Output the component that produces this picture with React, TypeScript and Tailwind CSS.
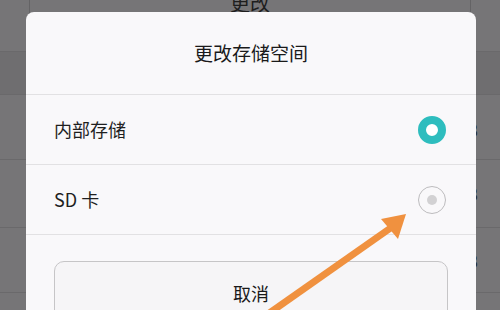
export default function App() {
  const font = { fontFamily: '"Noto Sans CJK SC", "Noto Sans", sans-serif' };
  return (
    <div className="relative w-[500px] h-[310px] overflow-hidden bg-[#767577]" style={font}>
      {/* page behind the dialog */}
      <div className="flex flex-col">
        <div className="h-[52px] flex justify-center border-b border-[#6a696b]">
          <div className="w-[442px] h-[52px] border-x border-[#646365] flex justify-center">
            <span className="text-[20px] leading-none text-[#1e1e1e] -mt-[7px]">更改</span>
          </div>
        </div>
        <div className="h-[43px] bg-[#6f6e70] border-b border-[#6a696b]" />
        <div className="h-[65px] border-b border-[#6a696b] flex items-center justify-end pr-[22px] pt-[4px] text-[18px] text-[#2a2a2a]">3</div>
        <div className="h-[68px] border-b border-[#6a696b] flex items-center justify-end pr-[22px] text-[18px] text-[#2a2a2a]">3</div>
        <div className="h-[65px] border-b border-[#6a696b] flex items-center justify-end pr-[22px] text-[18px] text-[#2a2a2a]">3</div>
      </div>

      {/* dialog */}
      <div className="absolute left-[26px] top-[12px] w-[450px] h-[320px] rounded-[8px] bg-[#f9f8fa] flex flex-col">
        <div className="h-[83px] flex items-center justify-center border-b border-[#e2e1e3] text-[19px] text-[#1a1a1a]">
          更改存储空间
        </div>
        <div className="h-[70px] flex items-center justify-between pl-[28px] pr-[30px] border-b border-[#e2e1e3]">
          <span className="text-[18px] text-[#1f1f1f]">内部存储</span>
          <div className="w-[28px] h-[28px] rounded-full border-[8px] border-[#2ebdbe] bg-white" />
        </div>
        <div className="h-[70px] flex items-center justify-between pl-[28px] pr-[30px] border-b border-[#e2e1e3]">
          <span className="text-[18px] text-[#1f1f1f]">SD 卡</span>
          <div className="w-[28px] h-[28px] rounded-full border border-[#bdbcbe] flex items-center justify-center">
            <div className="w-[10px] h-[10px] rounded-full bg-[#d2d1d3]" />
          </div>
        </div>
        <div className="pt-[26px] px-[28px]">
          <div className="h-[64px] rounded-[10px] border border-[#c6c5c7] bg-[#f6f5f7] flex items-center justify-center text-[18px] text-[#1a1a1a]">
            取消
          </div>
        </div>
      </div>

      {/* annotation arrow */}
      <svg className="absolute inset-0" width="500" height="310" viewBox="0 0 500 310">
        <line x1="268" y1="314" x2="392" y2="227" stroke="#f0913f" strokeWidth="7" />
        <polygon points="406,214 381,219 398,239" fill="#f0913f" />
      </svg>
    </div>
  );
}
